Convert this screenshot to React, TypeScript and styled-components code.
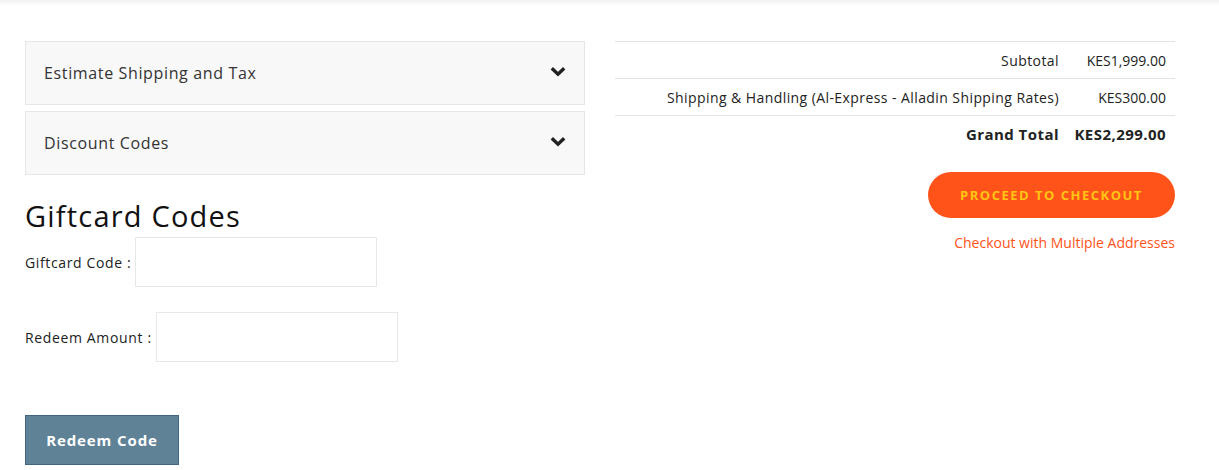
import React from 'react';
import styled, { createGlobalStyle } from 'styled-components';

const Global = createGlobalStyle`
    html, body {
        margin: 0;
        padding: 0;
        background: #fff;
        font-family: "Open Sans", "Noto Sans", Arial, sans-serif;
        letter-spacing: 0.04em;
        color: #222;
    }
`;

function Chevron() {
    return (
        <svg width="16" height="11" viewBox="0 0 16 11">
            <path d="M1.8 2.2 L8 8.2 L14.2 2.2" fill="none" stroke="#222" strokeWidth="3.4" strokeLinejoin="miter" />
        </svg>
    );
}

function App() {
    const totals = [
        { label: 'Subtotal', value: 'KES1,999.00' },
        { label: 'Shipping & Handling (Al-Express - Alladin Shipping Rates)', value: 'KES300.00' },
    ];
    return (
        <Wrap>
            <Global />
            <TopShade />
            <div className="cart">
                <Left>
                    <Block>
                        <span>Estimate Shipping and Tax</span>
                        <Chevron />
                    </Block>
                    <Block>
                        <span>Discount Codes</span>
                        <Chevron />
                    </Block>
                    <Title>Giftcard Codes</Title>
                    <Field>
                        <label>Giftcard Code :</label>
                        <Input />
                    </Field>
                    <Field $gap={25}>
                        <label>Redeem Amount :</label>
                        <Input />
                    </Field>
                    <Redeem>Redeem Code</Redeem>
                </Left>
                <Right>
                    <Totals>
                        <tbody>
                            {totals.map((t) => (
                                <tr key={t.label}>
                                    <th>{t.label}</th>
                                    <td>{t.value}</td>
                                </tr>
                            ))}
                            <tr className="grand">
                                <th>Grand Total</th>
                                <td>KES2,299.00</td>
                            </tr>
                        </tbody>
                    </Totals>
                    <Checkout>Proceed to Checkout</Checkout>
                    <Multi href="#">Checkout with Multiple Addresses</Multi>
                </Right>
            </div>
        </Wrap>
    );
}

const Wrap = styled.div`
    position: relative;
    width: 1219px;
    height: 470px;
    overflow: hidden;
    .cart {
        display: grid;
        grid-template-columns: 560px 560px;
        column-gap: 30px;
        padding: 41px 25px 0;
    }
`;

const TopShade = styled.div`
    position: absolute;
    top: 0;
    left: 0;
    right: 0;
    height: 6px;
    background: linear-gradient(#f1f1f1, rgba(255, 255, 255, 0));
`;

const Left = styled.div`
    display: flex;
    flex-direction: column;
    align-items: flex-start;
`;

const Block = styled.div`
    box-sizing: border-box;
    width: 560px;
    height: 64px;
    margin-bottom: 6px;
    padding: 0 18px 1px 18px;
    display: flex;
    align-items: center;
    justify-content: space-between;
    background: #f8f8f8;
    border: 1px solid #e6e6e6;
    font-size: 16px;
    color: #333;
    svg {
        margin-top: -2px;
    }
`;

const Title = styled.h2`
    margin: 18px 0 4px;
    font-size: 29px;
    font-weight: 400;
    letter-spacing: 1.2px;
    line-height: 34px;
    color: #111;
`;

const Field = styled.div<{ $gap?: number }>`
    display: flex;
    align-items: center;
    gap: 4px;
    margin-top: ${(p) => p.$gap || 0}px;
    label {
        font-size: 14px;
        color: #222;
    }
`;

const Input = styled.input`
    box-sizing: border-box;
    width: 242px;
    height: 50px;
    border: 1px solid #e8e8e8;
    background: #fff;
    outline: none;
`;

const Redeem = styled.button`
    margin-top: 53px;
    width: 154px;
    height: 50px;
    background: #5f8297;
    border: 1px solid #3e6680;
    color: #fff;
    font-family: inherit;
    font-size: 15px;
    font-weight: 700;
    letter-spacing: 0.06em;
    cursor: pointer;
`;

const Right = styled.div`
    display: flex;
    flex-direction: column;
    align-items: flex-end;
`;

const Totals = styled.table`
    width: 100%;
    border-collapse: collapse;
    font-size: 14px;
    color: #222;
    border-top: 1px solid #e3e3e3;
    th, td {
        height: 36px;
        padding: 0;
        text-align: right;
        font-weight: 400;
    }
    th {
        letter-spacing: 0.03em;
    }
    td {
        width: 107px;
        padding-right: 9px;
        letter-spacing: 0;
    }
    tr {
        border-bottom: 1px solid #e3e3e3;
    }
    tr.grand {
        border-bottom: none;
    }
    tr.grand th, tr.grand td {
        font-weight: 700;
        font-size: 15px;
        letter-spacing: 0.03em;
    }
`;

const Checkout = styled.button`
    margin-top: 20px;
    width: 247px;
    height: 46px;
    border: none;
    border-radius: 23px;
    background: #ff5319;
    color: #ffc414;
    font-family: inherit;
    font-size: 13px;
    font-weight: 700;
    letter-spacing: 1.5px;
    text-transform: uppercase;
    cursor: pointer;
`;

const Multi = styled.a`
    margin-top: 15px;
    font-size: 14px;
    letter-spacing: 0;
    color: #ff5319;
    text-decoration: none;
`;

export default App;
